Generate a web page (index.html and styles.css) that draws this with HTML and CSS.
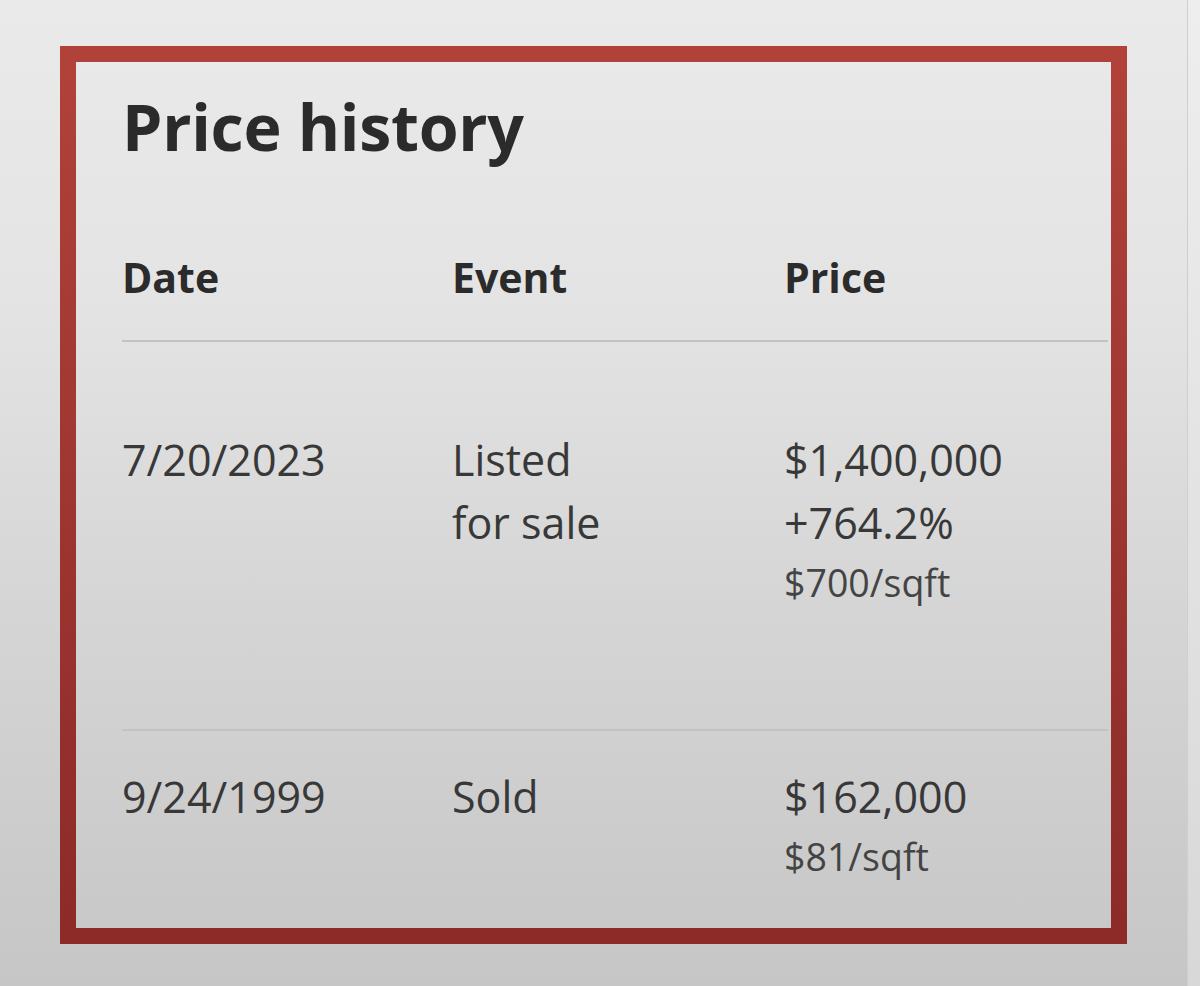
FILE: index.html
```html
<!DOCTYPE html>
<html lang="en">
<head>
<meta charset="utf-8">
<title>Price history</title>
<link rel="stylesheet" href="styles.css">
</head>
<body>
<main class="page">
  <section class="card">
    <h1 class="title">Price history</h1>
    <div class="table">
      <div class="row head">
        <div class="cell">Date</div>
        <div class="cell">Event</div>
        <div class="cell">Price</div>
      </div>
      <div class="row first">
        <div class="cell">7/20/2023</div>
        <div class="cell">Listed<br>for sale</div>
        <div class="cell price">
          <span class="amount">$1,400,000</span>
          <span class="change">+764.2%</span>
          <span class="sqft">$700/sqft</span>
        </div>
      </div>
      <div class="row last">
        <div class="cell">9/24/1999</div>
        <div class="cell">Sold</div>
        <div class="cell price">
          <span class="amount">$162,000</span>
          <span class="sqft">$81/sqft</span>
        </div>
      </div>
    </div>
  </section>
</main>
<aside class="scrollbar"></aside>
</body>
</html>
```

FILE: styles.css
```css
html, body {
  margin: 0;
  padding: 0;
  height: 100%;
}

body {
  display: flex;
  min-height: 986px;
  background: linear-gradient(180deg, #eaeaea 0%, #e4e4e4 30%, #d6d6d6 60%, #c6c6c6 100%);
  font-family: "Open Sans", "Liberation Sans", sans-serif;
  color: #383838;
}

.page {
  flex: 1;
  padding: 46px 0 0 60px;
}

.card {
  box-sizing: border-box;
  width: 1067px;
  height: 898px;
  border: 16px solid #a53a31;
  border-image: linear-gradient(180deg, #b0423a 0%, #9e3631 50%, #8c2b28 100%) 1;
  padding: 25px 3px 0 46px;
}

.title {
  margin: 0;
  font-size: 64.5px;
  line-height: 79px;
  font-weight: 700;
  color: #2b2b2b;
  letter-spacing: -0.3px;
}

.table {
  margin-top: 88px;
}

.row {
  display: grid;
  grid-template-columns: 330px 332px 1fr;
  border-bottom: 2px solid #c2c2c2;
  font-size: 43px;
  line-height: 63px;
}

.row.head {
  font-size: 41px;
  line-height: 47px;
  font-weight: 700;
  color: #2b2b2b;
  padding-bottom: 39px;
}

.row.first {
  padding-top: 86px;
  padding-bottom: 118px;
}

.row.last {
  padding-top: 34px;
  border-bottom: none;
}

.price {
  display: flex;
  flex-direction: column;
}

.sqft {
  font-size: 37.5px;
  line-height: 57px;
  color: #444;
}

.scrollbar {
  width: 12px;
  border-left: 1px solid #cfcfcf;
  background: linear-gradient(180deg, #eeeeee 0%, #d8d8d8 100%);
}
```
